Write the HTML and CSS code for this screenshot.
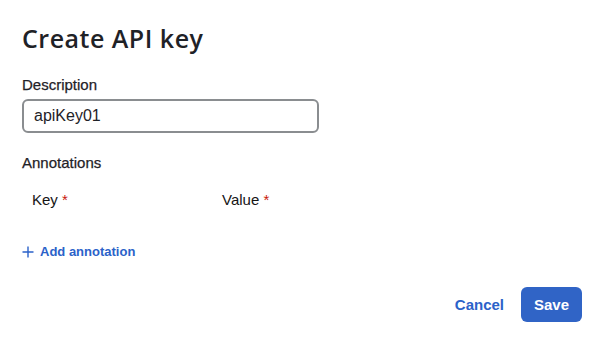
FILE: index.html
```html
<!DOCTYPE html>
<html>
<head>
<meta charset="utf-8">
<link rel="stylesheet" href="styles.css">
</head>
<body>
<div class="modal">
  <h1 class="title">Create API key</h1>
  <div class="field">
    <label class="label">Description</label>
    <div class="input">apiKey01</div>
  </div>
  <div class="section">
    <div class="label">Annotations</div>
    <div class="cols">
      <div class="col col-key">Key <span class="req">*</span></div>
      <div class="col">Value <span class="req">*</span></div>
    </div>
    <div class="add">
      <svg class="plus" width="12" height="12" viewBox="0 0 12 12"><path d="M6 0.5V11.5M0.5 6H11.5" stroke="#2b62c9" stroke-width="1.4" fill="none"/></svg>
      <span>Add annotation</span>
    </div>
  </div>
  <div class="footer">
    <span class="link">Cancel</span>
    <span class="btn">Save</span>
  </div>
</div>
</body>
</html>
```
FILE: styles.css
```css
html, body { margin: 0; padding: 0; background: #fff; }
body { font-family: "Liberation Sans", Arial, sans-serif; color: #151515; width: 600px; height: 343px; overflow: hidden; }
.modal { padding: 22px 18px 0 22px; }
.title { margin: 0; font-family: "Open Sans", sans-serif; font-weight: 600; font-size: 25px; line-height: 32px; color: #1f2227; letter-spacing: 0.5px; }
.field { margin-top: 21px; }
.label { display: block; font-size: 15px; line-height: 20px; color: #1f2227; -webkit-text-stroke: 0.25px #1f2227; }
.input { margin-top: 4px; width: 273px; height: 30px; border: 2px solid #8a8d90; border-radius: 6px; padding: 0 10px; font-size: 16px; line-height: 30px; color: #1f2227; }
.section { margin-top: 20px; }
.cols { display: flex; margin-top: 17px; padding-left: 10px; font-size: 15px; line-height: 20px; }
.col-key { width: 190px; }
.req { color: #c9190b; }
.add { margin-top: 33px; display: flex; align-items: center; gap: 6px; color: #2b62c9; font-weight: 700; font-size: 13px; line-height: 18px; }
.footer { margin-top: 26px; display: flex; justify-content: flex-end; align-items: center; gap: 17px; }
.link { color: #2b62c9; font-weight: 700; font-size: 15px; }
.btn { background: #3064c6; color: #fff; font-weight: 700; font-size: 15px; height: 35px; width: 61px; border-radius: 6px; display: flex; align-items: center; justify-content: center; }
```
